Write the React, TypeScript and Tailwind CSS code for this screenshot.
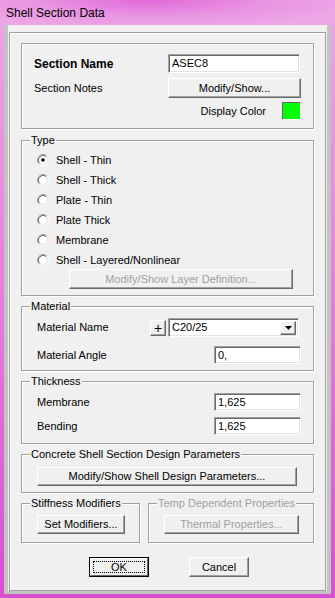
import React from 'react'

const btn =
  'flex items-center justify-center bg-[#f0f0f0] border border-t-white border-l-white border-r-[#696969] border-b-[#696969] shadow-[inset_-1px_-1px_0_#a0a0a0]'
const field =
  'flex items-center bg-white border border-t-[#a0a0a0] border-l-[#a0a0a0] border-r-white border-b-white shadow-[inset_1px_1px_0_#696969,inset_-1px_-1px_0_#e3e3e3] pl-[3px]'
const group = 'box-border border border-[#a0a0a0] shadow-[inset_1px_1px_0_#fff,1px_1px_0_#fff]'

function Caption({ text, disabled }: { text: string; disabled?: boolean }) {
  return (
    <div
      className={`-mt-[7px] ml-[8px] w-fit px-[1px] h-[13px] leading-[13px] bg-[#f0f0f0] ${
        disabled ? 'text-[#a0a0a0]' : 'text-black'
      }`}
    >
      {text}
    </div>
  )
}

function Radio({ checked }: { checked?: boolean }) {
  return (
    <svg width="12" height="12" viewBox="0 0 12 12" className="shrink-0">
      <circle cx="6" cy="6" r="4.5" fill="#fff" />
      <path d="M2.11 9.89 A5.5 5.5 0 0 1 9.89 2.11" fill="none" stroke="#a0a0a0" strokeWidth="1" />
      <path d="M9.89 2.11 A5.5 5.5 0 0 1 2.11 9.89" fill="none" stroke="#ffffff" strokeWidth="1" />
      <path d="M2.82 9.18 A4.5 4.5 0 0 1 9.18 2.82" fill="none" stroke="#696969" strokeWidth="1" />
      <path d="M9.18 2.82 A4.5 4.5 0 0 1 2.82 9.18" fill="none" stroke="#e3e3e3" strokeWidth="1" />
      {checked && <circle cx="6" cy="6" r="1.8" fill="#000" />}
    </svg>
  )
}

const types = [
  'Shell - Thin',
  'Shell - Thick',
  'Plate - Thin',
  'Plate Thick',
  'Membrane',
  'Shell - Layered/Nonlinear',
]

export default function App() {
  return (
    <div className="w-[335px] h-[598px] flex flex-col overflow-hidden bg-[linear-gradient(180deg,#eba6e5_0%,#e488dc_40%,#d650cf_100%)] font-['Liberation_Sans',Arial,sans-serif] text-[11px] text-black">
      {/* title bar */}
      <div className="h-[25px] shrink-0 flex items-center px-[6px] text-[12px] bg-[radial-gradient(ellipse_at_45%_0%,#e068d8_0%,#e995e2_45%,#eca6e6_80%)]">
        Shell Section Data
      </div>

      {/* client */}
      <div className="mx-[4px] h-[569px] bg-[#c3c3c3] px-[4px] pb-[3px] flex flex-col">
        <div className="flex-1 bg-[#f0f0f0] pt-[7px] px-[1px]">
          <div className="h-[559px] box-border border border-[#a0a0a0] shadow-[inset_1px_1px_0_#fff] px-[11px] flex flex-col">
            {/* section */}
            <div className={`${group} mt-[10px] h-[86px] pl-[12px] pr-[12px] flex flex-col`}>
              <div className="mt-[10px] h-[19px] flex items-center">
                <span className="w-[134px] font-bold text-[12px]">Section Name</span>
                <div className={`${field} w-[132px] h-[19px]`}>ASEC8</div>
              </div>
              <div className="mt-[5px] h-[20px] flex items-center">
                <span className="w-[134px]">Section Notes</span>
                <button className={`${btn} w-[133px] h-[20px]`}>Modify/Show...</button>
              </div>
              <div className="mt-[4px] h-[18px] flex items-center justify-end gap-[16px]">
                <span>Display Color</span>
                <div className="w-[19px] h-[18px] bg-[#00ff00] border border-t-[#696969] border-l-[#696969] border-r-white border-b-white" />
              </div>
            </div>

            {/* type */}
            <div className={`${group} mt-[11px] h-[156px] flex flex-col`}>
              <Caption text="Type" />
              <div className="mt-[3px] flex flex-col pl-[15px]">
                {types.map((t, i) => (
                  <div key={t} className="h-[20px] flex items-center gap-[7px]">
                    <Radio checked={i === 0} />
                    <span>{t}</span>
                  </div>
                ))}
              </div>
              <button className={`${btn} -mt-[1px] ml-[47px] w-[224px] h-[20px] text-[#a0a0a0]`}>
                Modify/Show Layer Definition...
              </button>
            </div>

            {/* material */}
            <div className={`${group} mt-[10px] h-[65px] flex flex-col pl-[15px] pr-[12px]`}>
              <div className="-ml-[15px]">
                <Caption text="Material" />
              </div>
              <div className="mt-[5px] h-[19px] flex items-center">
                <span className="w-[113px]">Material Name</span>
                <button className={`${btn} w-[16px] h-[16px] text-[14px] leading-none text-black`}>+</button>
                <div className={`${field} ml-[2px] w-[131px] h-[19px] justify-between pr-[2px]`}>
                  <span>C20/25</span>
                  <div className={`${btn} w-[16px] h-[14px]`}>
                    <svg width="7" height="4" viewBox="0 0 7 4">
                      <path d="M0 0 H7 L3.5 4 Z" fill="#000" />
                    </svg>
                  </div>
                </div>
              </div>
              <div className="mt-[9px] h-[18px] flex items-center justify-between">
                <span>Material Angle</span>
                <div className={`${field} w-[87px] h-[18px]`}>0,</div>
              </div>
            </div>

            {/* thickness */}
            <div className={`${group} mt-[10px] h-[63px] flex flex-col pl-[15px] pr-[12px]`}>
              <div className="-ml-[15px]">
                <Caption text="Thickness" />
              </div>
              <div className="mt-[5px] h-[18px] flex items-center justify-between">
                <span>Membrane</span>
                <div className={`${field} w-[87px] h-[18px]`}>1,625</div>
              </div>
              <div className="mt-[6px] h-[18px] flex items-center justify-between">
                <span>Bending</span>
                <div className={`${field} w-[87px] h-[18px]`}>1,625</div>
              </div>
            </div>

            {/* concrete design */}
            <div className={`${group} mt-[10px] h-[39px] flex flex-col`}>
              <Caption text="Concrete Shell Section Design Parameters" />
              <button className={`${btn} mt-[6px] ml-[15px] w-[260px] h-[19px] text-black`}>
                Modify/Show Shell Design Parameters...
              </button>
            </div>

            {/* modifiers / temp */}
            <div className="mt-[10px] flex gap-[8px]">
              <div className={`${group} w-[119px] h-[40px] flex flex-col`}>
                <Caption text="Stiffness Modifiers" />
                <button className={`${btn} mt-[5px] ml-[15px] w-[88px] h-[19px] text-black`}>Set Modifiers...</button>
              </div>
              <div className={`${group} w-[166px] h-[40px] flex flex-col`}>
                <Caption text="Temp Dependent Properties" disabled />
                <button className={`${btn} mt-[5px] ml-[15px] w-[135px] h-[19px] text-[#a0a0a0]`}>
                  Thermal Properties...
                </button>
              </div>
            </div>

            {/* ok / cancel */}
            <div className="mt-[14px] flex gap-[40px] pl-[68px]">
              <button className="w-[60px] h-[20px] border border-black bg-[#f0f0f0] p-0">
                <div className="w-full h-full flex items-center justify-center border border-t-white border-l-white border-r-[#696969] border-b-[#696969] p-[2px]">
                  <div className="w-full h-full flex items-center justify-center border border-dotted border-black">
                    OK
                  </div>
                </div>
              </button>
              <button className={`${btn} w-[60px] h-[20px] text-black`}>Cancel</button>
            </div>
          </div>
        </div>
      </div>
    </div>
  )
}
